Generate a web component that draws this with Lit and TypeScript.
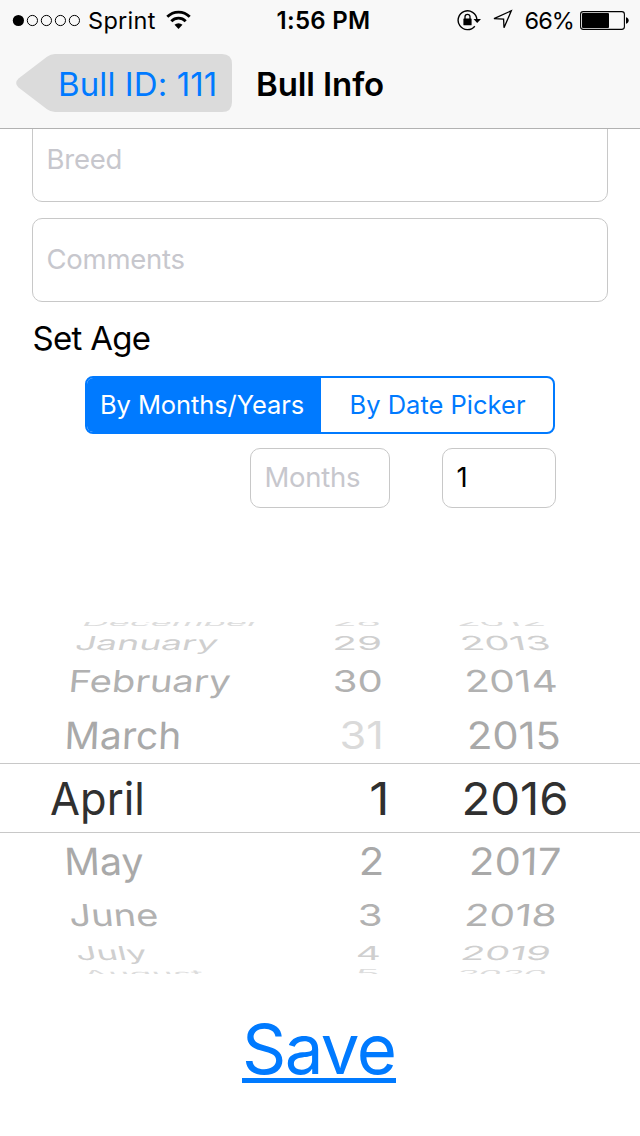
import { LitElement, html, css, svg } from 'lit';
import { customElement, property, state } from 'lit/decorators.js';

const FONT = 'Inter, "Liberation Sans", sans-serif';

@customElement('status-bar')
export class StatusBar extends LitElement {
  static styles = css`
    :host { display: grid; grid-template-columns: 1fr auto 1fr; height: 40px; align-items: center; color: #000; font-size: 23.5px; line-height: 38px; }
    .side { display: flex; align-items: center; }
    .carrier { letter-spacing: 0.3px; margin: 0 9px 0 7px; padding-top: 2px; width: 69px; }
    .left { padding-left: 12px; }
    .right { justify-content: flex-end; padding-right: 11px; }
    .time { font-weight: 600; font-size: 24px; letter-spacing: 0.3px; padding: 2px 0 0 7px; }
    .lock { margin-right: 11px; }
    .loc { margin-right: 11.5px; }
    .pct { margin-right: 6px; letter-spacing: -0.9px; padding-top: 2px; }
    svg { display: block; flex: none; }
  `;
  render() {
    return html`
      <div class="side left">
        <svg width="69" height="40" viewBox="0 0 69 40">
          <circle cx="6.4" cy="20.5" r="5.6" />
          ${[20.4, 34.4, 48.4, 62.4].map(
            (x) => svg`<circle cx=${x} cy="20.5" r="5.1" fill="none" stroke="#000" stroke-width="1" />`
          )}
        </svg>
        <span class="carrier">Sprint</span>
        <svg width="25" height="40" viewBox="0 0 25 40">
          <g fill="none" stroke="#000" stroke-width="2.8">
            <path d="M1.3 16.8A15.7 15.7 0 0 1 23.7 16.8" />
            <path d="M5.3 21.2A10 10 0 0 1 19.7 21.2" />
          </g>
          <path d="M12.5 29L8.5 24.8A6 6 0 0 1 16.5 24.8Z" />
        </svg>
      </div>
      <span class="time">1:56 PM</span>
      <div class="side right">
        <svg class="lock" width="24" height="40" viewBox="0 0 24 40">
          <path d="M17.8 26.2A9.4 9.4 0 1 1 19.9 19.5" fill="none" stroke="#000" stroke-width="1.4" />
          <path d="M16.5 19H24L20.2 23Z" />
          <rect x="6.4" y="18.5" width="8.2" height="6.8" rx=".6" />
          <path d="M8 19.5V16.8a2.5 2.5 0 0 1 5 0V19.5" fill="none" stroke="#000" stroke-width="1.3" />
        </svg>
        <svg class="loc" width="21" height="40" viewBox="0 0 21 40">
          <path d="M2 18.7L19.3 10.8L12 27.8L11.6 19.2Z" fill="none" stroke="#000" stroke-width="1.3" />
        </svg>
        <span class="pct">66%</span>
        <svg width="49" height="40" viewBox="0 0 49 40">
          <rect x=".6" y="11.6" width="43.8" height="17.8" rx="2.6" fill="none" stroke="#000" stroke-width="1.1" />
          <rect x="2" y="13" width="27" height="15" rx="1" />
          <path d="M46 17.2C49.6 18 49.6 23 46 23.8Z" />
        </svg>
      </div>
    `;
  }
}

@customElement('nav-bar')
export class NavBar extends LitElement {
  static styles = css`
    :host { display: flex; height: 88px; box-sizing: border-box; padding: 14px 0 0 16px; font-size: 33px; line-height: 58px; }
    .back { display: grid; width: 216px; height: 58px; color: #007aff; }
    .back svg, .label { grid-area: 1 / 1; }
    .label { padding: 1px 0 0 42px; white-space: nowrap; letter-spacing: 0.1px; z-index: 1; }
    .title { margin-left: 24px; padding-top: 1px; font-weight: 600; white-space: nowrap; letter-spacing: -0.1px; }
  `;
  render() {
    return html`
      <div class="back">
        <svg width="216" height="58" viewBox="0 0 216 58">
          <path fill="#dbdbdb" d="M39 0H206Q216 0 216 10V48Q216 58 206 58H39Q34.5 58 31 55.3L2.5 33.5Q-2.2 29 2.5 24.5L31 2.7Q34.5 0 39 0Z" />
        </svg>
        <span class="label">Bull ID: 111</span>
      </div>
      <span class="title">Bull Info</span>
    `;
  }
}

@customElement('text-field')
export class TextField extends LitElement {
  @property() value = '';
  @property() placeholder = '';
  static styles = css`
    :host { display: flex; align-items: center; box-sizing: border-box; border: 1px solid #c8c8c8; border-radius: 10px; background: #fff; padding: 0 0 2px 13.5px; font-size: 27.5px; color: #000; }
    .ph { color: #c7c7cd; letter-spacing: -0.25px; }
  `;
  render() {
    return this.value
      ? html`<span>${this.value}</span>`
      : html`<span class="ph">${this.placeholder}</span>`;
  }
}

interface Cell { text: string; left: number; right: number; skew: number; dim?: boolean; }
interface Row { cap: number; base: number; color: string; cells: Cell[]; }

const c = (text: string, left: number, right: number, skew = 0, dim = false): Cell => ({ text, left, right, skew, dim });

const ROWS: Row[] = [
  { cap: 7, base: 626.3, color: '#dcdcdc', cells: [c('December', 84, 262, 0.6), c('28', 335, 379), c('2012', 457, 544.5, -0.6)] },
  { cap: 14, base: 650, color: '#cfcfcf', cells: [c('January', 75.5, 218, 0.24), c('29', 335, 380), c('2013', 462.5, 550, -0.22)] },
  { cap: 22, base: 692, color: '#b1b1b1', cells: [c('February', 71, 230.5, 0.1), c('30', 334.5, 381), c('2014', 467, 557, -0.09)] },
  { cap: 27.3, base: 749, color: '#a9a9a9', cells: [c('March', 67.5, 179, 0.04), c('31', 341.5, 380.5, 0, true), c('2015', 469.5, 559.5, -0.03)] },
  { cap: 33.2, base: 815, color: '#303030', cells: [c('April', 51, 141.8), c('1', 371.5, 385.5), c('2016', 464.5, 566)] },
  { cap: 27.3, base: 874.7, color: '#a9a9a9', cells: [c('May', 67.5, 143.5, -0.04), c('2', 361.5, 381.5), c('2017', 471.5, 559.5, 0.03)] },
  { cap: 22, base: 926, color: '#b1b1b1', cells: [c('June', 70.5, 158, -0.1), c('3', 359.5, 380.5), c('2018', 466.5, 555, 0.09)] },
  { cap: 14, base: 960, color: '#cfcfcf', cells: [c('July', 77, 148, -0.24), c('4', 357.5, 379.5), c('2019', 462, 549.5, 0.22)] },
  { cap: 7, base: 977, color: '#dcdcdc', cells: [c('August', 84, 206, -0.6), c('5', 358, 378), c('2020', 457, 546, 0.6)] },
];

@customElement('date-wheel')
export class DateWheel extends LitElement {
  static styles = css`
    :host { display: block; height: 352px; }
    svg { display: block; overflow: hidden; }
    text { font: 370 46px Inter, "Liberation Sans", sans-serif; }
  `;
  private ctx = document.createElement('canvas').getContext('2d')!;

  // Squeezes a cell onto its slice of the wheel: ink width, cap height and lean.
  private cell(row: Row, cell: Cell) {
    this.ctx.font = `370 46px ${FONT}`;
    const m = this.ctx.measureText(cell.text);
    const lean = cell.skew * row.cap;
    const width = cell.right - cell.left - Math.abs(lean) * 0.7;
    const sx = width / (m.actualBoundingBoxRight + m.actualBoundingBoxLeft);
    const x = cell.left + m.actualBoundingBoxLeft * sx + Math.max(0, -lean) * 0.6;
    const sy = row.cap / (46 * 0.727);
    const t = `matrix(${sx} 0 ${-cell.skew * sy} ${sy} ${x} ${row.base - 622})`;
    return svg`<text transform=${t} fill=${cell.dim ? '#dadada' : row.color}>${cell.text}</text>`;
  }

  render() {
    return html`
      <svg width="640" height="352" viewBox="0 0 640 352">
        ${ROWS.map((r) => r.cells.map((k) => this.cell(r, k)))}
        <rect x="0" y="141" width="640" height="1" fill="#c8c8c8" />
        <rect x="0" y="210" width="640" height="1" fill="#c8c8c8" />
      </svg>
    `;
  }
}

@customElement('app-root')
export class AppRoot extends LitElement {
  @state() private mode = 0;
  static styles = css`
    :host { display: flex; flex-direction: column; width: 640px; height: 1136px; overflow: hidden; background: #fff; color: #000; font-family: Inter, "Liberation Sans", sans-serif; }
    .head { flex: none; background: #f8f8f8; border-bottom: 1px solid #b2b2b2; }
    .body { flex: 1; min-height: 0; overflow: hidden; display: flex; flex-direction: column; }
    .form { display: flex; flex-direction: column; gap: 16px; padding: 0 32px; margin-top: -11px; }
    .form text-field { height: 84px; }
    .label { margin: 12px 0 0 32.5px; font-size: 33px; line-height: 48px; letter-spacing: -0.7px; height: 49px; }
    .seg { display: grid; grid-template-columns: 234px 1fr; width: 470px; height: 58px; box-sizing: border-box; margin: 13px 0 0 85px; border: 2px solid #007aff; border-radius: 8px; overflow: hidden; font-size: 25.5px; line-height: 54px; text-align: center; color: #007aff; letter-spacing: 0; }
    .seg span { padding-left: 1px; }
    .seg .on { background: #007aff; color: #fff; letter-spacing: -0.1px; padding: 0 4px 0 0; }
    .age { display: flex; gap: 52px; margin: 14px 0 0 250px; }
    .months { width: 140px; height: 60px; }
    .years { width: 114px; height: 60px; }
    date-wheel { margin-top: 114px; }
    .save { width: 154px; margin: 31px 0 0 242px; font-size: 69px; letter-spacing: -1.6px; color: #007aff; }
    .save span { display: block; height: 73px; border-bottom: 5px solid #007aff; line-height: 88px; white-space: nowrap; }
  `;
  render() {
    return html`
      <div class="head">
        <status-bar></status-bar>
        <nav-bar></nav-bar>
      </div>
      <div class="body">
        <div class="form">
          <text-field placeholder="Breed"></text-field>
          <text-field placeholder="Comments"></text-field>
        </div>
        <div class="label">Set Age</div>
        <div class="seg">
          ${['By Months/Years', 'By Date Picker'].map(
            (t, i) => html`<span class=${i === this.mode ? 'on' : ''} @click=${() => (this.mode = i)}>${t}</span>`
          )}
        </div>
        <div class="age">
          <text-field class="months" placeholder="Months"></text-field>
          <text-field class="years" value="1"></text-field>
        </div>
        <date-wheel></date-wheel>
        <div class="save"><span>Save</span></div>
      </div>
    `;
  }
}
